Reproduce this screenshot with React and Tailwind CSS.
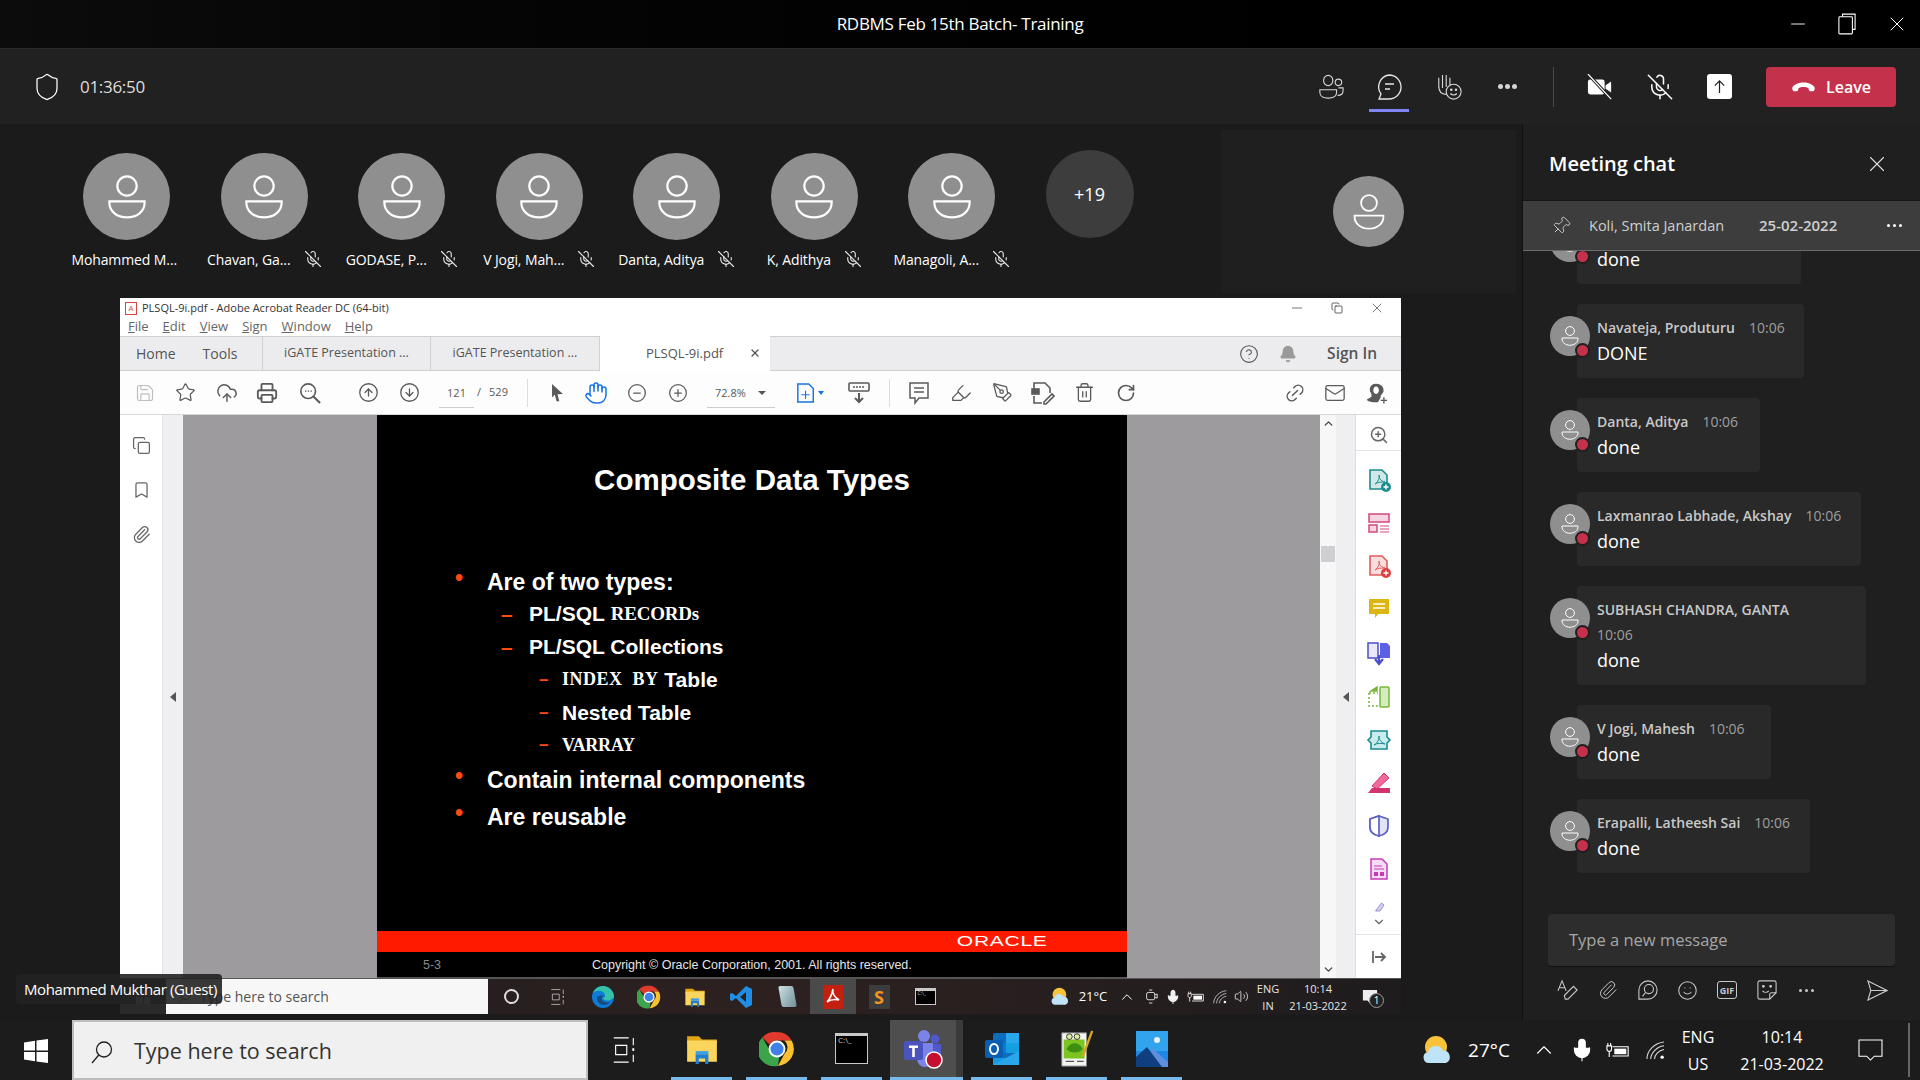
import React from "react";
import {
  Bell, Bookmark, ChevronDown, ChevronUp, CircleArrowDown, CircleArrowUp, CircleHelp, CircleMinus, CirclePlus,
  CloudUpload, Copy, Hand, Highlighter, Link2, Mail, Mic, MicOff, Minus, Paperclip, PenTool, Pin, Printer,
  RotateCw, Save, Shield, Smile, Star, Trash2, Volume2, X, ZoomIn,
} from "lucide-react";

const names = [
  ["Mohammed M...", false],
  ["Chavan, Ga...", true],
  ["GODASE, P...", true],
  ["V Jogi, Mah...", true],
  ["Danta, Aditya", true],
  ["K, Adithya", true],
  ["Managoli, A...", true],
];

const messages = [
  { name: "", time: "", text: "done", width: "w-[224px]", top: "-mt-[41px]" },
  { name: "Navateja, Produturu", time: "10:06", text: "DONE", width: "w-[227px]" },
  { name: "Danta, Aditya", time: "10:06", text: "done", width: "w-[183px]" },
  { name: "Laxmanrao Labhade, Akshay", time: "10:06", text: "done", width: "w-[284px]" },
  { name: "SUBHASH CHANDRA, GANTA", time: "10:06", text: "done", width: "w-[289px]", wrap: true },
  { name: "V Jogi, Mahesh", time: "10:06", text: "done", width: "w-[194px]" },
  { name: "Erapalli, Latheesh Sai", time: "10:06", text: "done", width: "w-[233px]" },
];

const PersonAvatar = ({ box, glyph }) => (
  <div className={`${box} rounded-full bg-[#8f8f8f] flex items-center justify-center shrink-0`}>
    <svg viewBox="0 0 40 40" className={glyph} fill="none" stroke="#fff" strokeWidth="2">
      <circle cx="20" cy="10" r="8.800" />
      <path d="M4 24h32v1.500C36 33 29 38.500 20 38.500S4 33 4 25.500z" />
    </svg>
  </div>
);

const Folder = ({ s }) => (
  <svg viewBox="0 0 32 32" className={s}>
    <path d="M2 4h11l3 3h14v4H2z" fill="#e2a613" />
    <path d="M2 8h28v20H2z" fill="#fbd55c" />
    <path d="M10 21h12v9h-3v-5h-6v5h-3z" fill="#1f7fd0" />
    <path d="M10 18h12v3H10z" fill="#3aa0e8" />
  </svg>
);

const Chrome = ({ s }) => (
  <svg viewBox="0 0 32 32" className={s}>
    <path d="M16 1a15 15 0 0 1 13 7.5H16a7.5 7.5 0 0 0-6.5 3.8L3 5.700A15 15 0 0 1 16 1z" fill="#e0392e" />
    <path d="M29 8.500A15 15 0 0 1 16.800 31l6-11a7.500 7.500 0 0 0-.3-11.500z" fill="#fbc02d" />
    <path d="M3 5.700l6.500 11.300a7.500 7.500 0 0 0 8.500 6l-1.200 8A15 15 0 0 1 3 5.700z" fill="#3ca44a" />
    <circle cx="16" cy="16" r="7.500" fill="#fff" />
    <circle cx="16" cy="16" r="5.800" fill="#3f80ea" />
  </svg>
);

const Cmd = ({ s, t }) => (
  <div className={`${s} bg-black border border-[#c9c9c9] border-t-[3px] flex items-start pl-[2px]`}>
    <span className={`${t} leading-none text-[#c9c9c9]`}>C:\_</span>
  </div>
);

const TeamsLogo = () => (
  <svg viewBox="0 0 40 40" className="w-[40px] h-[40px]">
    <circle cx="21" cy="7" r="6" fill="#7b83eb" />
    <circle cx="32" cy="10" r="4.500" fill="#5059c9" />
    <path d="M26 15h12v13a6 6 0 0 1-6 6h-6z" fill="#5059c9" />
    <path d="M11 14h19v16a8 8 0 0 1-16 0z" fill="#7b83eb" />
    <rect x="1" y="12" width="19" height="19" rx="2" fill="#4b53bc" />
    <path d="M6 16.500h9v2.500h-3.200v9H9.200v-9H6z" fill="#fff" />
    <circle cx="31" cy="31" r="8" fill="#c50f2e" stroke="#fff" strokeWidth="1.500" />
  </svg>
);

const OutlookLogo = () => (
  <svg viewBox="0 0 36 36" className="w-[36px] h-[36px]">
    <rect x="9" y="2" width="26" height="32" rx="2" fill="#0f6cbd" />
    <rect x="22" y="2" width="13" height="10" fill="#28a8ea" />
    <rect x="9" y="12" width="13" height="10" fill="#0f78d4" />
    <rect x="22" y="12" width="13" height="10" fill="#14a0e0" />
    <path d="M9 22l26 12H9z" fill="#1a9ae0" />
    <path d="M9 34l26-14v14z" fill="#28a8ea" />
    <rect x="1" y="9" width="18" height="18" rx="2" fill="#0a5fb0" />
    <ellipse cx="10" cy="18" rx="4" ry="5" fill="none" stroke="#fff" strokeWidth="2" />
  </svg>
);

const NotepadLogo = () => (
  <svg viewBox="0 0 36 40" className="w-[36px] h-[38px]">
    <path d="M2 3h26v35H2z" fill="#f4f4f0" stroke="#888" />
    <rect x="4" y="10" width="22" height="20" fill="#7cc41f" />
    <circle cx="10" cy="7" r="3" fill="#d8f0a0" stroke="#333" />
    <circle cx="18" cy="7" r="3" fill="#d8f0a0" stroke="#333" />
    <path d="M7 20c4-8 13-8 17 0-4 5-13 5-17 0z" fill="#3f8f12" />
    <path d="M6 33h9M18 33h7" stroke="#555" strokeWidth="1.500" />
    <path d="M24 28L34 1" stroke="#d9a520" strokeWidth="2.500" />
  </svg>
);

const PhotosLogo = () => (
  <svg viewBox="0 0 32 36" className="w-[32px] h-[36px]">
    <rect width="32" height="36" fill="#1e88e5" />
    <rect width="32" height="20" fill="#32a4ee" />
    <circle cx="21" cy="9" r="3" fill="#e8f4ff" />
    <path d="M16 17l16 14v5H12z" fill="#5f8fdc" />
    <path d="M0 26l11-10 15 20H0z" fill="#103f7f" />
  </svg>
);

const WeatherIcon = ({ s }) => (
  <svg viewBox="0 0 32 30" className={s}>
    <circle cx="15" cy="12" r="11" fill="#f8c33a" />
    <path d="M8 28a5.500 5.500 0 0 1-1-10.900 8 8 0 0 1 15-1.500 6.500 6.500 0 0 1 3 12.400z" fill="#bfe3f7" />
  </svg>
);

const BatteryPlug = ({ s }) => (
  <svg viewBox="0 0 26 18" className={s} fill="none" stroke="#fff" strokeWidth="1.200">
    <path d="M7 5h17v10H7" />
    <path d="M9 7h13v6H9z" fill="#fff" stroke="none" />
    <path d="M2 1v3M5 1v3M1 4h5v3c0 2-1 3-2.500 3S1 9 1 7zM3.500 10v6" />
  </svg>
);

const WifiIcon = ({ s }) => (
  <svg viewBox="0 0 20 20" className={s} fill="none" stroke="#d8d8d8" strokeWidth="1.100">
    <path d="M1 19C1 10 9 2 19 1" />
    <path d="M5 19c0-6 6-13 14-14" />
    <path d="M9 19c0-4 4-9 10-10" />
    <circle cx="17" cy="17" r="1.800" fill="#fff" stroke="none" />
  </svg>
);

const SearchBarIcon = ({ s, color }) => (
  <svg viewBox="0 0 24 24" className={s} fill="none" stroke={color} strokeWidth="1.300">
    <circle cx="14" cy="9.500" r="7.500" />
    <path d="M8.800 15L2 23" />
  </svg>
);

const TaskViewIcon = ({ s, color }) => (
  <svg viewBox="0 0 24 28" className={s} fill="none" stroke={color} strokeWidth="1.200">
    <path d="M1 1h16M1 27h16M3 9h12v10H3z" />
    <path d="M22 1v8M22 19v8" />
    <rect x="21" y="12" width="2" height="3" fill={color} stroke="none" />
  </svg>
);

// right side tool rail of the pdf reader
const RailDoc = ({ color, badge }) => (
  <svg viewBox="0 0 24 24" className="w-[24px] h-[24px]" fill="none" stroke={color} strokeWidth="1.600">
    <path d="M3 2h12l5 5v14H3z" fill={`${color}33`} />
    <path d="M8 16c3-2 5-6 4-9 0 4 2 6 6 7-4 0-7 0-10 2z" strokeWidth="1" />
    {badge && <circle cx="19" cy="19" r="5" fill={badge} stroke="none" />}
    {badge && <path d="M16.500 19h5M19 16.500v5" stroke="#fff" strokeWidth="1.400" />}
  </svg>
);

const RailIcons = [
  <RailDoc key="a" color="#1c8c8c" badge="#1c8c8c" />,
  <svg key="b" viewBox="0 0 24 24" className="w-[24px] h-[24px]" fill="none" stroke="#d4477a" strokeWidth="1.500">
    <rect x="2" y="3" width="20" height="8" fill="#f6d5e2" />
    <rect x="2" y="14" width="8" height="7" fill="#f6d5e2" />
    <path d="M13 15h9M13 18h9M13 21h9" strokeWidth="1" />
  </svg>,
  <RailDoc key="c" color="#e45b5b" badge="#e03e3e" />,
  <svg key="d" viewBox="0 0 24 24" className="w-[24px] h-[24px]">
    <path d="M2 2h20v15H11l-3 4v-4H2z" fill="#dcb714" />
    <path d="M6 7h12M6 11h12" stroke="#fff" strokeWidth="1.500" />
  </svg>,
  <svg key="e" viewBox="0 0 26 26" className="w-[26px] h-[26px]" fill="none" stroke="#4a4ecb" strokeWidth="1.500">
    <path d="M2 3h10v15H2z" fill="#e9e9fb" />
    <path d="M14 3h7l3 3v12H14z" fill="#5c60e6" stroke="none" />
    <path d="M13 15v7M9 19l4 5 4-5" strokeWidth="2.200" />
  </svg>,
  <svg key="f" viewBox="0 0 24 24" className="w-[24px] h-[24px]" fill="none" stroke="#78b53a" strokeWidth="1.500">
    <rect x="13" y="2" width="9" height="20" rx="1" fill="#d5ecc0" />
    <path d="M2 8h9M2 8v13h9" strokeDasharray="2 2" />
    <path d="M10 2L4 6h6z" fill="#78b53a" />
  </svg>,
  <svg key="g" viewBox="0 0 26 24" className="w-[26px] h-[24px]" fill="none" stroke="#1a8a92" strokeWidth="1.600">
    <path d="M5 3h16v6l3 3-3 3v6H5v-6l-3-3 3-3z" fill="#c8ecec" />
    <path d="M8 17c4-2 5-6 5-9 0 4 2 6 6 8-4-1-8-1-11 1z" strokeWidth="1" />
  </svg>,
  <svg key="h" viewBox="0 0 24 24" className="w-[24px] h-[24px]">
    <path d="M5 15L17 2l5 5-12 11z" fill="#f06a9c" stroke="#d5336f" />
    <path d="M1 22l4-5h18v5z" fill="#d5336f" />
  </svg>,
  <svg key="i" viewBox="0 0 24 24" className="w-[24px] h-[24px]" stroke="#5c60c8" strokeWidth="1.700">
    <path d="M12 2l9 3v8c0 5-4 8-9 9-5-1-9-4-9-9V5z" fill="#e3e3f6" />
    <path d="M12 2v20c-5-1-9-4-9-9V5z" fill="#fff" />
  </svg>,
  <svg key="j" viewBox="0 0 24 24" className="w-[24px] h-[24px]" fill="none" stroke="#c43bb8" strokeWidth="1.500">
    <path d="M4 2h11l5 5v15H4z" fill="#f6dcf3" />
    <path d="M7 9h8M7 12h10" strokeWidth="1" />
    <rect x="7" y="15" width="4" height="4" fill="#c43bb8" stroke="none" />
    <rect x="13" y="15" width="4" height="4" fill="#c43bb8" stroke="none" />
  </svg>,
];

const Slide = () => (
  <div className="w-[750px] h-full bg-black flex flex-col text-white [font-family:'Liberation_Sans',sans-serif] font-bold">
    <div className="pt-[45px] h-[85px] text-center text-[29.500px] leading-[40px]">Composite Data Types</div>
    <div className="mt-[66px] text-[23px]">
      <div className="h-[32px] flex items-center pl-[78px]">
        <span className="w-[32px] -mt-[8px] text-[#ff4a10]">•</span>Are of two types:
      </div>
      <div className="h-[32px] flex items-center pl-[124px] text-[21px]">
        <span className="w-[28px] text-[#ff4a10]">–</span>PL/SQL&nbsp;
        <span className="[font-family:'Liberation_Serif',serif] text-[19px] tracking-[-0.200px]">RECORDs</span>
      </div>
      <div className="h-[33px] flex items-center pl-[124px] text-[21px]">
        <span className="w-[28px] text-[#ff4a10]">–</span>PL/SQL Collections
      </div>
      <div className="h-[33px] flex items-center pl-[162px] text-[21px]">
        <span className="w-[23px] text-[#ff4a10] text-[17px]">–</span>
        <span className="[font-family:'Liberation_Serif',serif] text-[18px] tracking-[0.500px] whitespace-pre">INDEX  BY</span>&nbsp;Table
      </div>
      <div className="h-[34px] flex items-center pl-[162px] text-[21px]">
        <span className="w-[23px] text-[#ff4a10] text-[17px]">–</span>Nested Table
      </div>
      <div className="h-[30px] flex items-center pl-[162px]">
        <span className="w-[23px] text-[#ff4a10] text-[17px]">–</span>
        <span className="[font-family:'Liberation_Serif',serif] text-[18px] tracking-[-0.200px]">VARRAY</span>
      </div>
      <div className="h-[40px] flex items-center pl-[78px]">
        <span className="w-[32px] -mt-[8px] text-[#ff4a10]">•</span>Contain internal components
      </div>
      <div className="h-[34px] flex items-center pl-[78px]">
        <span className="w-[32px] -mt-[8px] text-[#ff4a10]">•</span>Are reusable
      </div>
    </div>
    <div className="flex-1" />
    <div className="h-[21px] bg-[#ff1a00] flex items-center justify-end pr-[79px]">
      <span className="text-[14.500px] font-normal leading-none tracking-[0.5px] scale-x-[1.45] origin-right">ORACLE</span>
    </div>
    <div className="h-[26px] flex items-center font-normal text-[12.500px] border-b border-[#555] pt-[2px]">
      <span className="w-[215px] pl-[46px] text-[#8a8a8a]">5-3</span>
      <span className="text-[#e6e6e6]">Copyright © Oracle Corporation, 2001. All rights reserved.</span>
    </div>
  </div>
);

const AcrobatWindow = () => (
  <div className="ml-[120px] w-[1281px] h-[716px] bg-white flex flex-col text-[#4b4b4b]">
    <div className="h-[20px] pl-[5px] pr-[16px] flex items-center text-[11px] text-[#333]">
      <div className="w-[12px] h-[13px] bg-white border border-[#d9453a] mr-[5px] flex items-center justify-center text-[8px] text-[#d9453a] leading-none">A</div>
      <span>PLSQL-9i.pdf - Adobe Acrobat Reader DC (64-bit)</span>
      <div className="ml-auto flex items-center gap-[26px]">
        <Minus className="w-[16px] h-[16px]" strokeWidth={1} />
        <Copy className="w-[12px] h-[12px]" strokeWidth={1.500} />
        <X className="w-[16px] h-[16px]" strokeWidth={1} />
      </div>
    </div>
    <div className="h-[18px] pl-[8px] flex items-center gap-[14px] text-[13px] text-[#666]">
      <span><u>F</u>ile</span><span><u>E</u>dit</span><span><u>V</u>iew</span><span><u>S</u>ign</span><span><u>W</u>indow</span><span><u>H</u>elp</span>
    </div>
    <div className="h-[35px] bg-[#ececee] border-y border-[#d0d0d0] flex items-center text-[14px] text-[#555]">
      <div className="w-[143px] h-full flex items-center gap-[27px] pl-[16px] border-r border-[#d0d0d0]"><span>Home</span><span>Tools</span></div>
      <div className="w-[168px] h-full flex items-center justify-center border-r border-[#d0d0d0] text-[12.500px]">iGATE Presentation ...</div>
      <div className="w-[169px] h-full flex items-center justify-center border-r border-[#d0d0d0] text-[12.500px]">iGATE Presentation ...</div>
      <div className="w-[170px] h-[35px] bg-white flex items-center pl-[46px] text-[13px] relative">
        PLSQL-9i.pdf
        <X className="absolute right-[9px] top-[11px] w-[12px] h-[12px]" strokeWidth={2.500} />
      </div>
      <div className="ml-auto flex items-center pr-[24px]">
        <CircleHelp className="w-[20px] h-[20px] mr-[20px]" strokeWidth={1.300} />
        <Bell className="w-[18px] h-[18px] mr-[30px] text-[#999] fill-[#999]" />
        <span className="text-[15.500px] font-semibold">Sign In</span>
      </div>
    </div>
    <div className="h-[44px] bg-[#fdfdfd] border-b border-[#d8d8d8] flex items-center pl-[15px] text-[#5a5a5a]">
      <Save className="w-[20px] h-[20px] text-[#bdbdbd]" strokeWidth={1.400} />
      <Star className="w-[21px] h-[21px] ml-[20px]" strokeWidth={1.400} />
      <CloudUpload className="w-[22px] h-[22px] ml-[20px]" strokeWidth={1.600} />
      <Printer className="w-[22px] h-[22px] ml-[18px]" strokeWidth={2} />
      <svg viewBox="0 0 24 24" className="w-[22px] h-[22px] ml-[21px]" fill="none" stroke="#5a5a5a" strokeWidth="1.800">
        <circle cx="10" cy="10" r="8" />
        <path d="M16 16l7 7" strokeWidth="2.200" />
        <path d="M6.500 10h1.500M9.500 10H11M12.500 10H14" strokeWidth="1.200" />
      </svg>
      <CircleArrowUp className="w-[21px] h-[21px] ml-[37px]" strokeWidth={1.500} />
      <CircleArrowDown className="w-[21px] h-[21px] ml-[20px]" strokeWidth={1.500} />
      <div className="w-[35px] ml-[19px] text-[11px] text-center border-b border-[#ccc] h-[30px] leading-[28px] pt-[1px]">121</div>
      <span className="ml-[3px] text-[11px]">/</span>
      <span className="ml-[8px] text-[11px]">529</span>
      <div className="w-px h-[28px] bg-[#ddd] ml-[19px]" />
      <svg viewBox="0 0 16 22" className="w-[15px] h-[20px] ml-[22px]"><path d="M2 1l12 11-6 .5L10 20H7L5 13l-3 3z" fill="#5a5a5a" /></svg>
      <Hand className="w-[24px] h-[24px] ml-[19px] text-[#1473e6]" strokeWidth={1.500} />
      <CircleMinus className="w-[20px] h-[20px] ml-[19px]" strokeWidth={1.500} />
      <CirclePlus className="w-[20px] h-[20px] ml-[21px]" strokeWidth={1.500} />
      <div className="w-[68px] ml-[19px] text-[11px] h-[30px] leading-[28px] pt-[1px] border-b border-[#ccc] flex items-center pl-[8px]">
        72.8%<span className="ml-[12px] w-0 h-0 border-x-[4px] border-x-transparent border-t-[4px] border-t-[#555]" />
      </div>
      <svg viewBox="0 0 22 24" className="w-[20px] h-[22px] ml-[21px]" fill="none" stroke="#1473e6" strokeWidth="1.600">
        <path d="M2 2h12l5 5v15H2z" />
        <path d="M6 14h9M10.500 9.500v9" strokeWidth="1.200" />
      </svg>
      <span className="ml-[2px] w-0 h-0 border-x-[3px] border-x-transparent border-t-[4px] border-t-[#1473e6]" />
      <svg viewBox="0 0 22 24" className="w-[22px] h-[24px] ml-[24px]" fill="none" stroke="#5a5a5a" strokeWidth="1.600">
        <rect x="1" y="2" width="20" height="8" rx="1" />
        <path d="M5 6h12" strokeDasharray="2 1" />
        <path d="M11 12v9M7 17l4 4 4-4" strokeWidth="2" />
      </svg>
      <div className="w-px h-[28px] bg-[#ddd] ml-[19px]" />
      <svg viewBox="0 0 22 24" className="w-[22px] h-[24px] ml-[18px]" fill="none" stroke="#5a5a5a" strokeWidth="1.500">
        <path d="M2 2h18v15h-9l-4 5v-5H2z" />
        <path d="M6 7h10M6 11h10" />
      </svg>
      <Highlighter className="w-[22px] h-[22px] ml-[20px]" strokeWidth={1.400} />
      <PenTool className="w-[21px] h-[21px] ml-[20px]" strokeWidth={1.500} />
      <svg viewBox="0 0 24 24" className="w-[24px] h-[24px] ml-[18px]" fill="none" stroke="#5a5a5a" strokeWidth="1.600">
        <path d="M3 8V2h11l5 5v5M3 15v7h8" />
        <rect x="1" y="8" width="7" height="5" fill="#5a5a5a" />
        <path d="M13 21l8-8 2 2-8 8h-2z" />
      </svg>
      <Trash2 className="w-[21px] h-[21px] ml-[19px]" strokeWidth={1.500} />
      <RotateCw className="w-[20px] h-[20px] ml-[21px]" strokeWidth={2} />
      <Link2 className="w-[22px] h-[22px] ml-[148px] -rotate-45" strokeWidth={1.600} />
      <Mail className="w-[22px] h-[22px] ml-[18px]" strokeWidth={1.400} />
      <svg viewBox="0 0 24 24" className="w-[22px] h-[22px] ml-[20px]">
        <path d="M11 2c6 0 9 4 8 9l-3 4v2l-3 5H8c-6-1-7-2-7-3l5-3v-3C3 10 3 2 11 2z" fill="#5a5a5a" />
        <path d="M8 9c0-2 1-4 3-4s3 2 3 4-1 4-3 4-3-2-3-4z" fill="#fff" />
        <path d="M16 20h7M19.500 16.500v7" stroke="#5a5a5a" strokeWidth="1.500" />
      </svg>
    </div>
    <div className="h-[563px] flex">
      <div className="w-[43px] flex flex-col items-center gap-[25px] pt-[21px] border-r border-[#e3e3e3] text-[#666]">
        <Copy className="w-[19px] h-[19px]" strokeWidth={1.600} />
        <Bookmark className="w-[19px] h-[20px]" strokeWidth={1.600} />
        <Paperclip className="w-[19px] h-[19px]" strokeWidth={1.600} />
      </div>
      <div className="w-[20px] bg-[#efeff1] flex items-center justify-center">
        <span className="w-0 h-0 border-y-[5px] border-y-transparent border-r-[6px] border-r-[#555]" />
      </div>
      <div className="w-[194px] bg-[#9d9b9e]" />
      <Slide />
      <div className="w-[193px] bg-[#9d9b9e]" />
      <div className="w-[16px] bg-[#f7f7f8] flex flex-col items-center py-[2px] text-[#444]">
        <ChevronUp className="w-[13px] h-[13px]" strokeWidth={2.500} />
        <div className="w-[14px] h-[16px] bg-[#cfcfd2] mt-[116px]" />
        <ChevronDown className="w-[13px] h-[13px] mt-auto" strokeWidth={2.500} />
      </div>
      <div className="w-[20px] bg-[#efeff1] border-r border-[#ddd] flex items-center justify-center">
        <span className="w-0 h-0 border-y-[5px] border-y-transparent border-r-[6px] border-r-[#555]" />
      </div>
      <div className="w-[45px] flex flex-col items-center text-[#666]">
        <div className="h-[36px] w-full border-b border-[#e3e3e3] flex items-start justify-center pt-[10px]">
          <ZoomIn className="w-[20px] h-[20px]" strokeWidth={1.800} />
        </div>
        <div className="flex flex-col items-center gap-[19px] pt-[17px] h-[464px] overflow-hidden shrink-0">
          {RailIcons}
          <svg viewBox="0 0 24 24" className="w-[20px] h-[12px] shrink-0"><path d="M5 22L17 6l5 4-8 12z" fill="#d6d0f0" stroke="#7e73c9" strokeWidth="1.500" /></svg>
        </div>
        <ChevronDown className="w-[14px] h-[14px] shrink-0" strokeWidth={2} />
        <div className="w-full border-t border-[#e3e3e3] mt-[5px] pt-[14px] flex justify-center">
          <svg viewBox="0 0 16 16" className="w-[16px] h-[16px]" fill="none" stroke="#666" strokeWidth="1.800"><path d="M2 2v12M4 8h10M10 4l4 4-4 4" /></svg>
        </div>
      </div>
    </div>
    <div className="h-[36px] flex bg-gradient-to-r from-[#1f1c1e] via-[#2d2120] to-[#1f1c1e] text-white border-t border-[#555]">
      <div className="w-[46px] bg-[#2a2a2a] flex items-center justify-center">
        <div className="grid grid-cols-2 gap-[1px] w-[14px] h-[14px]"><i className="bg-[#999]" /><i className="bg-[#999]" /><i className="bg-[#999]" /><i className="bg-[#999]" /></div>
      </div>
      <div className="w-[322px] bg-[#f7f7f7] flex items-center pl-[11px] text-[14px] text-[#555]">
        <SearchBarIcon s="w-[15px] h-[15px] mr-[8px]" color="#444" />Type here to search
      </div>
      <div className="w-[46px] flex items-center justify-center"><span className="w-[15px] h-[15px] rounded-full border-2 border-[#ddd]" /></div>
      <div className="w-[46px] flex items-center justify-center"><TaskViewIcon s="w-[15px] h-[16px]" color="#ddd" /></div>
      <div className="w-[46px] flex items-center justify-center">
        <svg viewBox="0 0 24 24" className="w-[24px] h-[24px]">
          <circle cx="12" cy="12" r="11" fill="#0f7bd8" />
          <path d="M23 12c0-6-5-11-11-11C6 1 3 5 2 8c3-3 9-3 11 0 2 2 1 5-1 5s4 4 7 2c2-1 4-2 4-3z" fill="#35c1a5" />
          <path d="M6 13c0 4 3 7 6 7 3 0 6-1 7-3-3 1-7 0-8-2-1-3 1-4 2-4-3-1-7 0-7 2z" fill="#1f1c1e" opacity=".5" />
        </svg>
      </div>
      <div className="w-[46px] flex items-center justify-center"><Chrome s="w-[24px] h-[24px]" /></div>
      <div className="w-[46px] flex items-center justify-center"><Folder s="w-[22px] h-[22px]" /></div>
      <div className="w-[46px] flex items-center justify-center">
        <svg viewBox="0 0 24 24" className="w-[24px] h-[24px]">
          <path d="M17 1l6 3v16l-6 3-10-10-4 3-2-1V9l2-1 4 3zM17 7l-6 5 6 5z" fill="#1f8fe5" />
        </svg>
      </div>
      <div className="w-[46px] flex items-center justify-center">
        <div className="w-[15px] h-[21px] rounded-[2px] bg-gradient-to-br from-[#cfe3e6] to-[#6e8f95] skew-x-[10deg]" />
      </div>
      <div className="w-[46px] flex items-center justify-center bg-[#4a4a4a]">
        <svg viewBox="0 0 20 24" className="w-[20px] h-[24px]">
          <rect width="20" height="24" fill="#c4200f" />
          <path d="M10 4c-1 4 0 7 6 11-5-1-8-1-12 2 3-3 5-8 6-13z" fill="none" stroke="#fff" strokeWidth="1.600" />
        </svg>
      </div>
      <div className="w-[46px] flex items-center justify-center">
        <div className="w-[21px] h-[24px] bg-[#3c3c3c] flex items-center justify-center text-[#f4931e] text-[18px] font-bold leading-none">S</div>
      </div>
      <div className="w-[46px] flex items-center justify-center"><Cmd s="w-[21px] h-[17px]" t="text-[5px]" /></div>
      <div className="w-[24px] ml-[100px] flex items-center justify-center"><WeatherIcon s="w-[20px] h-[19px]" /></div>
      <div className="w-[42px] flex items-center justify-center text-[13px]">21°C</div>
      <div className="w-[26px] flex items-center justify-center"><ChevronUp className="w-[18px] h-[18px]" strokeWidth={1.300} /></div>
      <div className="w-[22px] flex items-center justify-center">
        <svg viewBox="0 0 16 20" className="w-[13px] h-[17px]" fill="none" stroke="#ddd" strokeWidth="1.200"><rect x="2" y="5" width="10" height="9" rx="2" /><path d="M5 2h4M5 18h4M12 8l3-1v5l-3-1" /></svg>
      </div>
      <div className="w-[22px] flex items-center justify-center"><Mic className="w-[16px] h-[18px] fill-[#eee]" strokeWidth={1.300} /></div>
      <div className="w-[24px] flex items-center justify-center"><BatteryPlug s="w-[18px] h-[12px]" /></div>
      <div className="w-[23px] flex items-center justify-center"><WifiIcon s="w-[14px] h-[14px]" /></div>
      <div className="w-[21px] flex items-center justify-center"><Volume2 className="w-[15px] h-[15px]" strokeWidth={1.200} /></div>
      <div className="w-[32px] flex flex-col items-center justify-center text-[11px] leading-[17px] text-[#e6e6e6]"><span>ENG</span><span>IN</span></div>
      <div className="w-[68px] flex flex-col items-center justify-center text-[11px] leading-[17px] text-[#e6e6e6]"><span>10:14</span><span>21-03-2022</span></div>
      <div className="w-[36px] flex items-center justify-center relative">
        <svg viewBox="0 0 18 18" className="w-[16px] h-[16px]"><path d="M1 1h16v12h-5l-3 3-3-3H1z" fill="#eee" /></svg>
        <span className="absolute right-[4px] bottom-[6px] w-[15px] h-[15px] rounded-full border border-[#999] bg-[#222] text-[10px] leading-[13px] text-center">1</span>
      </div>
    </div>
  </div>
);

const Message = ({ m }) => (
  <div className={`flex pl-[27px] shrink-0 ${m.top || ""}`}>
    <div className="relative mt-[12px] z-10 h-[40px]">
      <PersonAvatar box="w-[40px] h-[40px]" glyph="w-[20px] h-[20px]" />
      <span className="absolute right-0 top-[27px] w-[15px] h-[15px] rounded-full bg-[#c4314b] border-[2px] border-[#1f1f1f]" />
    </div>
    <div className={`${m.width} -ml-[13px] bg-[#292929] rounded-[4px] pl-[20px] pr-[10px] pt-[14px] pb-[13px] h-fit`}>
      {m.name ? (
        <div className={`${m.wrap ? "flex flex-col" : "flex gap-[14px]"} text-[14px] leading-[20px] whitespace-nowrap`}>
          <span className="font-semibold text-[#c8c8c8]">{m.name}</span>
          <span className={`text-[#9f9f9f] ${m.wrap ? "mt-[5px]" : ""}`}>{m.time}</span>
        </div>
      ) : (
        <div className="h-[20px]" />
      )}
      <div className="text-[18px] leading-[24px] text-white mt-[3px]">{m.text}</div>
    </div>
  </div>
);

const ChatPanel = () => (
  <div className="w-[398px] border-l border-[#111] bg-[#1f1f1f] flex flex-col">
    <div className="h-[76px] flex items-center justify-between pl-[26px] pr-[30px] pt-[4px] text-white">
      <span className="text-[20px] font-semibold">Meeting chat</span>
      <X className="w-[26px] h-[26px] text-[#ddd]" strokeWidth={1} />
    </div>
    <div className="h-[51px] bg-[#3d3d3d] border-y border-y-[#6b6b6b] border-t-[#161616] flex items-center pl-[28px] text-[14.500px] text-[#cfcfcf] relative z-20">
      <Pin className="w-[20px] h-[20px] rotate-45 mr-[18px]" strokeWidth={1.100} />
      <span className="w-[170px]">Koli, Smita Janardan</span>
      <span className="font-semibold text-[15px]">25-02-2022</span>
      <span className="ml-[50px] flex gap-[3px]"><i className="w-[3px] h-[3px] rounded-full bg-white" /><i className="w-[3px] h-[3px] rounded-full bg-white" /><i className="w-[3px] h-[3px] rounded-full bg-white" /></span>
    </div>
    <div className="flex-1 overflow-hidden flex flex-col gap-[20px]">
      {messages.map((m, i) => <Message key={i} m={m} />)}
    </div>
    <div className="h-[106px] px-[25px]">
      <div className="h-[53px] bg-[#2d2d2d] rounded-[4px] border-b border-[#111] flex items-center pl-[21px] text-[16.500px] text-[#a6a6a6]">Type a new message</div>
      <div className="h-[44px] mt-[1px] flex items-center pl-[9px] pr-[7px] text-[#c8c8c8]">
        <svg viewBox="0 0 24 24" className="w-[22px] h-[22px]" fill="none" stroke="#c8c8c8" strokeWidth="1.200">
          <path d="M1 13L5.500 2 10 13M2.500 9.500h6" />
          <path d="M9 22l-1-4L18 8l4 4-10 10z" />
        </svg>
        <Paperclip className="w-[20px] h-[20px] ml-[19px]" strokeWidth={1.200} />
        <svg viewBox="0 0 22 22" className="w-[20px] h-[20px] ml-[20px]" fill="none" stroke="#c8c8c8" strokeWidth="1.200">
          <path d="M11 1a10 10 0 0 1 0 20H1v-10A10 10 0 0 1 11 1z" />
          <circle cx="12" cy="10" r="5" />
          <path d="M8 14l-3 4" />
        </svg>
        <Smile className="w-[21px] h-[21px] ml-[19px]" strokeWidth={1.200} />
        <span className="ml-[19px] w-[20px] h-[18px] border border-[#c8c8c8] rounded-[3px] text-[9px] font-bold flex items-center justify-center leading-none">GIF</span>
        <svg viewBox="0 0 22 22" className="w-[20px] h-[20px] ml-[20px]" fill="none" stroke="#c8c8c8" strokeWidth="1.200">
          <path d="M3 1h16a2 2 0 0 1 2 2v11l-7 7H3a2 2 0 0 1-2-2V3a2 2 0 0 1 2-2z" />
          <path d="M14 21v-5a2 2 0 0 1 2-2h5M6 12c2 2 5 2 7 0" />
          <circle cx="7" cy="7" r="1" fill="#c8c8c8" /><circle cx="15" cy="7" r="1" fill="#c8c8c8" />
        </svg>
        <span className="ml-[22px] flex gap-[3px]"><i className="w-[3px] h-[3px] rounded-full bg-[#c8c8c8]" /><i className="w-[3px] h-[3px] rounded-full bg-[#c8c8c8]" /><i className="w-[3px] h-[3px] rounded-full bg-[#c8c8c8]" /></span>
        <svg viewBox="0 0 22 22" className="w-[21px] h-[21px] ml-auto" fill="none" stroke="#c8c8c8" strokeWidth="1.200">
          <path d="M1 1l20 10L1 21l3-10zM4 11h17" />
        </svg>
      </div>
    </div>
  </div>
);

export default function App() {
  return (
    <div className="w-[1920px] h-[1080px] overflow-hidden flex flex-col bg-[#1b1b1b] text-white [font-family:'Open_Sans',sans-serif]">
      {/* window title */}
      <div className="h-[49px] grid grid-cols-3 items-center bg-gradient-to-r from-[#0c0c0c] to-black border-b border-[#2a2a2a]">
        <div />
        <div className="text-center text-[17px] tracking-[-0.3px]">RDBMS Feb 15th Batch- Training</div>
        <div className="flex justify-end items-center gap-[29px] pr-[11px]">
          <Minus className="w-[22px] h-[22px]" strokeWidth={1} />
          <svg viewBox="0 0 20 24" className="w-[18px] h-[22px]" fill="none" stroke="#fff" strokeWidth="1.200">
            <path d="M5 4V1h14v17h-3" />
            <rect x="1" y="4" width="15" height="19" rx="1" />
          </svg>
          <X className="w-[24px] h-[24px]" strokeWidth={1} />
        </div>
      </div>

      {/* meeting toolbar */}
      <div className="h-[75px] bg-[#212121] flex items-center pl-[32px] pr-[24px]">
        <Shield className="w-[30px] h-[30px]" strokeWidth={1} />
        <span className="ml-[18px] text-[17px] text-[#dcdcdc] tracking-[-0.3px]">01:36:50</span>
        <div className="ml-auto flex items-center">
          <svg viewBox="0 0 28 28" className="w-[26px] h-[26px]" fill="none" stroke="#d6d6d6" strokeWidth="1.200">
            <ellipse cx="11" cy="7" rx="5" ry="5.500" /><circle cx="22" cy="9" r="3.500" />
            <path d="M2 17h18v3c0 4-4 6-9 6s-9-2-9-6zM22 15h5v3c0 3-2 5-6 5" />
          </svg>
          <div className="relative ml-[31px]">
            <svg viewBox="0 0 28 28" className="w-[28px] h-[28px]" fill="none" stroke="#e6e6e6" strokeWidth="1.300">
              <path d="M14 2a12 12 0 0 1 0 24H4l2-5A12 12 0 0 1 14 2z" /><path d="M10 11h9M10 16h5" />
            </svg>
            <span className="absolute -left-[6px] top-[36px] w-[40px] h-[3px] bg-[#7f85f5]" />
          </div>
          <svg viewBox="0 0 28 30" className="w-[26px] h-[28px] ml-[33px]" fill="none" stroke="#d6d6d6" strokeWidth="1.200">
            <path d="M3 16V5M7 16V2M11 15V2M15 14V5M3 14c0 7 3 9 8 9" />
            <circle cx="19" cy="20" r="8" /><path d="M15.500 22c2 2 5 2 7 0" /><circle cx="16.500" cy="18" r=".8" fill="#d6d6d6" /><circle cx="21.500" cy="18" r=".8" fill="#d6d6d6" />
          </svg>
          <span className="ml-[36px] flex gap-[2px]"><i className="w-[5px] h-[5px] rounded-full bg-[#d6d6d6]" /><i className="w-[5px] h-[5px] rounded-full bg-[#d6d6d6]" /><i className="w-[5px] h-[5px] rounded-full bg-[#d6d6d6]" /></span>
          <div className="w-px h-[40px] bg-[#4a4a4a] ml-[36px]" />
          <svg viewBox="0 0 28 28" className="w-[26px] h-[26px] ml-[33px]" fill="none">
            <rect x="1" y="6" width="18" height="16" rx="2.500" fill="#fff" /><path d="M20 12l6-4v12l-6-4z" fill="#fff" />
            <path d="M2 1l24 26" stroke="#212121" strokeWidth="3.500" /><path d="M1 0l25 27" stroke="#fff" strokeWidth="1.300" />
          </svg>
          <MicOff className="w-[28px] h-[28px] ml-[33px]" strokeWidth={1.300} />
          <div className="ml-[33px] w-[25px] h-[25px] bg-white rounded-[3px] flex items-center justify-center">
            <svg viewBox="0 0 14 16" className="w-[13px] h-[15px]" fill="none" stroke="#212121" strokeWidth="1.300"><path d="M7 15V2M2 7l5-5 5 5" /></svg>
          </div>
          <div className="ml-[34px] w-[130px] h-[40px] rounded-[4px] bg-[#c4314b] flex items-center justify-center gap-[10px] text-[16px] font-semibold">
            <svg viewBox="0 0 26 14" className="w-[25px] h-[13px]"><path d="M1 8C5 1 21 1 25 8c.5 2-.5 4-2 4h-3c-1 0-1.500-1-1.500-3C16 7 10 7 7.500 9c0 2-.5 3-1.500 3H3c-1.500 0-2.500-2-2-4z" fill="#fff" /></svg>
            Leave
          </div>
        </div>
      </div>

      <div className="flex-1 flex min-h-0">
        {/* stage */}
        <div className="w-[1522px] relative flex flex-col">
          <div className="h-[174px] flex pl-[58px]">
            <div className="flex pt-[29px]">
              {names.map(([n, muted]) => (
                <div key={n} className="w-[137.5px] flex flex-col items-center">
                  <PersonAvatar box="w-[87px] h-[87px]" glyph="w-[44px] h-[44px]" />
                  <div className={`mt-[9px] h-[20px] flex items-center gap-[13px] text-[14px] tracking-[-0.1px] whitespace-nowrap ${muted ? "" : "pr-[5px]"}`}>
                    <span>{n}</span>
                    {muted && <MicOff className="w-[18px] h-[18px] text-[#e6e6e6]" strokeWidth={1.500} />}
                  </div>
                </div>
              ))}
              <div className="w-[88px] h-[88px] ml-[25px] -mt-[3px] rounded-full bg-[#3d3d3d] flex items-center justify-center text-[18px]">+19</div>
            </div>
            <div className="ml-auto mr-[6px] mt-[6px] w-[295px] h-[163px] bg-[#1f1f1f] flex items-center justify-center">
              <PersonAvatar box="w-[71px] h-[71px]" glyph="w-[36px] h-[36px]" />
            </div>
          </div>
          <AcrobatWindow />
          <div className="absolute left-[16px] top-[850px] w-[206px] h-[30px] rounded-[4px] bg-[#222]/90 flex items-center pl-[8px] text-[15px] tracking-[-0.4px] whitespace-nowrap">Mohammed Mukthar (Guest)</div>
        </div>
        <ChatPanel />
      </div>

      {/* windows taskbar */}
      <div className="h-[60px] bg-[#1c1c1c] flex shrink-0">
        <div className="w-[72px] flex items-center justify-center pt-[2px]">
          <svg viewBox="0 0 24 24" className="w-[24px] h-[24px]" fill="#fff">
            <path d="M0 3.500l11-1.700v9.700H0zM12.500 1.500L24 0v11.500H12.500zM0 13h11v9.200L0 20.500zM12.500 13H24v11l-11.500-1.600z" />
          </svg>
        </div>
        <div className="w-[516px] bg-[#f0f0f0] border-2 border-[#bdbdbd] flex items-center pl-[16px] pt-[3px] text-[21.500px] text-[#333]">
          <SearchBarIcon s="w-[24px] h-[26px] mr-[20px]" color="#222" />Type here to search
        </div>
        <div className="w-[72px] flex items-center justify-center"><TaskViewIcon s="w-[24px] h-[26px]" color="#fff" /></div>
        <div className="w-[61px] ml-[11px] border-b-[3px] border-[#76b9ed] flex items-center justify-center"><Folder s="w-[34px] h-[34px]" /></div>
        <div className="w-[61px] ml-[14px] border-b-[3px] border-[#76b9ed] flex items-center justify-center"><Chrome s="w-[36px] h-[36px]" /></div>
        <div className="w-[61px] ml-[14px] border-b-[3px] border-[#76b9ed] flex items-center justify-center"><Cmd s="w-[33px] h-[31px]" t="text-[8px]" /></div>
        <div className="w-[73px] ml-[8px] border-b-[3px] border-[#76b9ed] flex">
          <div className="w-[66px] bg-[#4e4e4e] flex items-center justify-center"><TeamsLogo /></div>
          <div className="w-[7px] bg-[#3a3a3a]" />
        </div>
        <div className="w-[61px] ml-[8px] border-b-[3px] border-[#76b9ed] flex items-center justify-center"><OutlookLogo /></div>
        <div className="w-[61px] ml-[14px] border-b-[3px] border-[#76b9ed] flex items-center justify-center"><NotepadLogo /></div>
        <div className="w-[61px] ml-[14px] border-b-[3px] border-[#76b9ed] flex items-center justify-center"><PhotosLogo /></div>
        <div className="ml-auto flex">
          <div className="w-[34px] flex items-center justify-center"><WeatherIcon s="w-[32px] h-[30px]" /></div>
          <div className="w-[70px] flex items-center justify-center text-[19px]">27°C</div>
          <div className="w-[40px] flex items-center justify-center"><ChevronUp className="w-[26px] h-[26px]" strokeWidth={1} /></div>
          <div className="w-[36px] flex items-center justify-center"><Mic className="w-[26px] h-[30px] fill-white" strokeWidth={1} /></div>
          <div className="w-[36px] flex items-center justify-center"><BatteryPlug s="w-[24px] h-[17px]" /></div>
          <div className="w-[38px] flex items-center justify-center"><WifiIcon s="w-[19px] h-[19px]" /></div>
          <div className="w-[48px] flex flex-col items-center justify-center text-[16px] leading-[27px] pt-[2px]"><span>ENG</span><span>US</span></div>
          <div className="w-[120px] flex flex-col items-center justify-center text-[16px] leading-[27px] pt-[2px]"><span>10:14</span><span>21-03-2022</span></div>
          <div className="w-[56px] flex items-center justify-center">
            <svg viewBox="0 0 26 24" className="w-[25px] h-[23px]" fill="none" stroke="#fff" strokeWidth="1.100"><path d="M1 1h24v17h-8l-4 4-4-4H1z" /></svg>
          </div>
          <div className="w-[22px] flex items-center justify-center"><span className="w-[2px] h-[54px] bg-[#666]" /></div>
        </div>
      </div>
    </div>
  );
}
